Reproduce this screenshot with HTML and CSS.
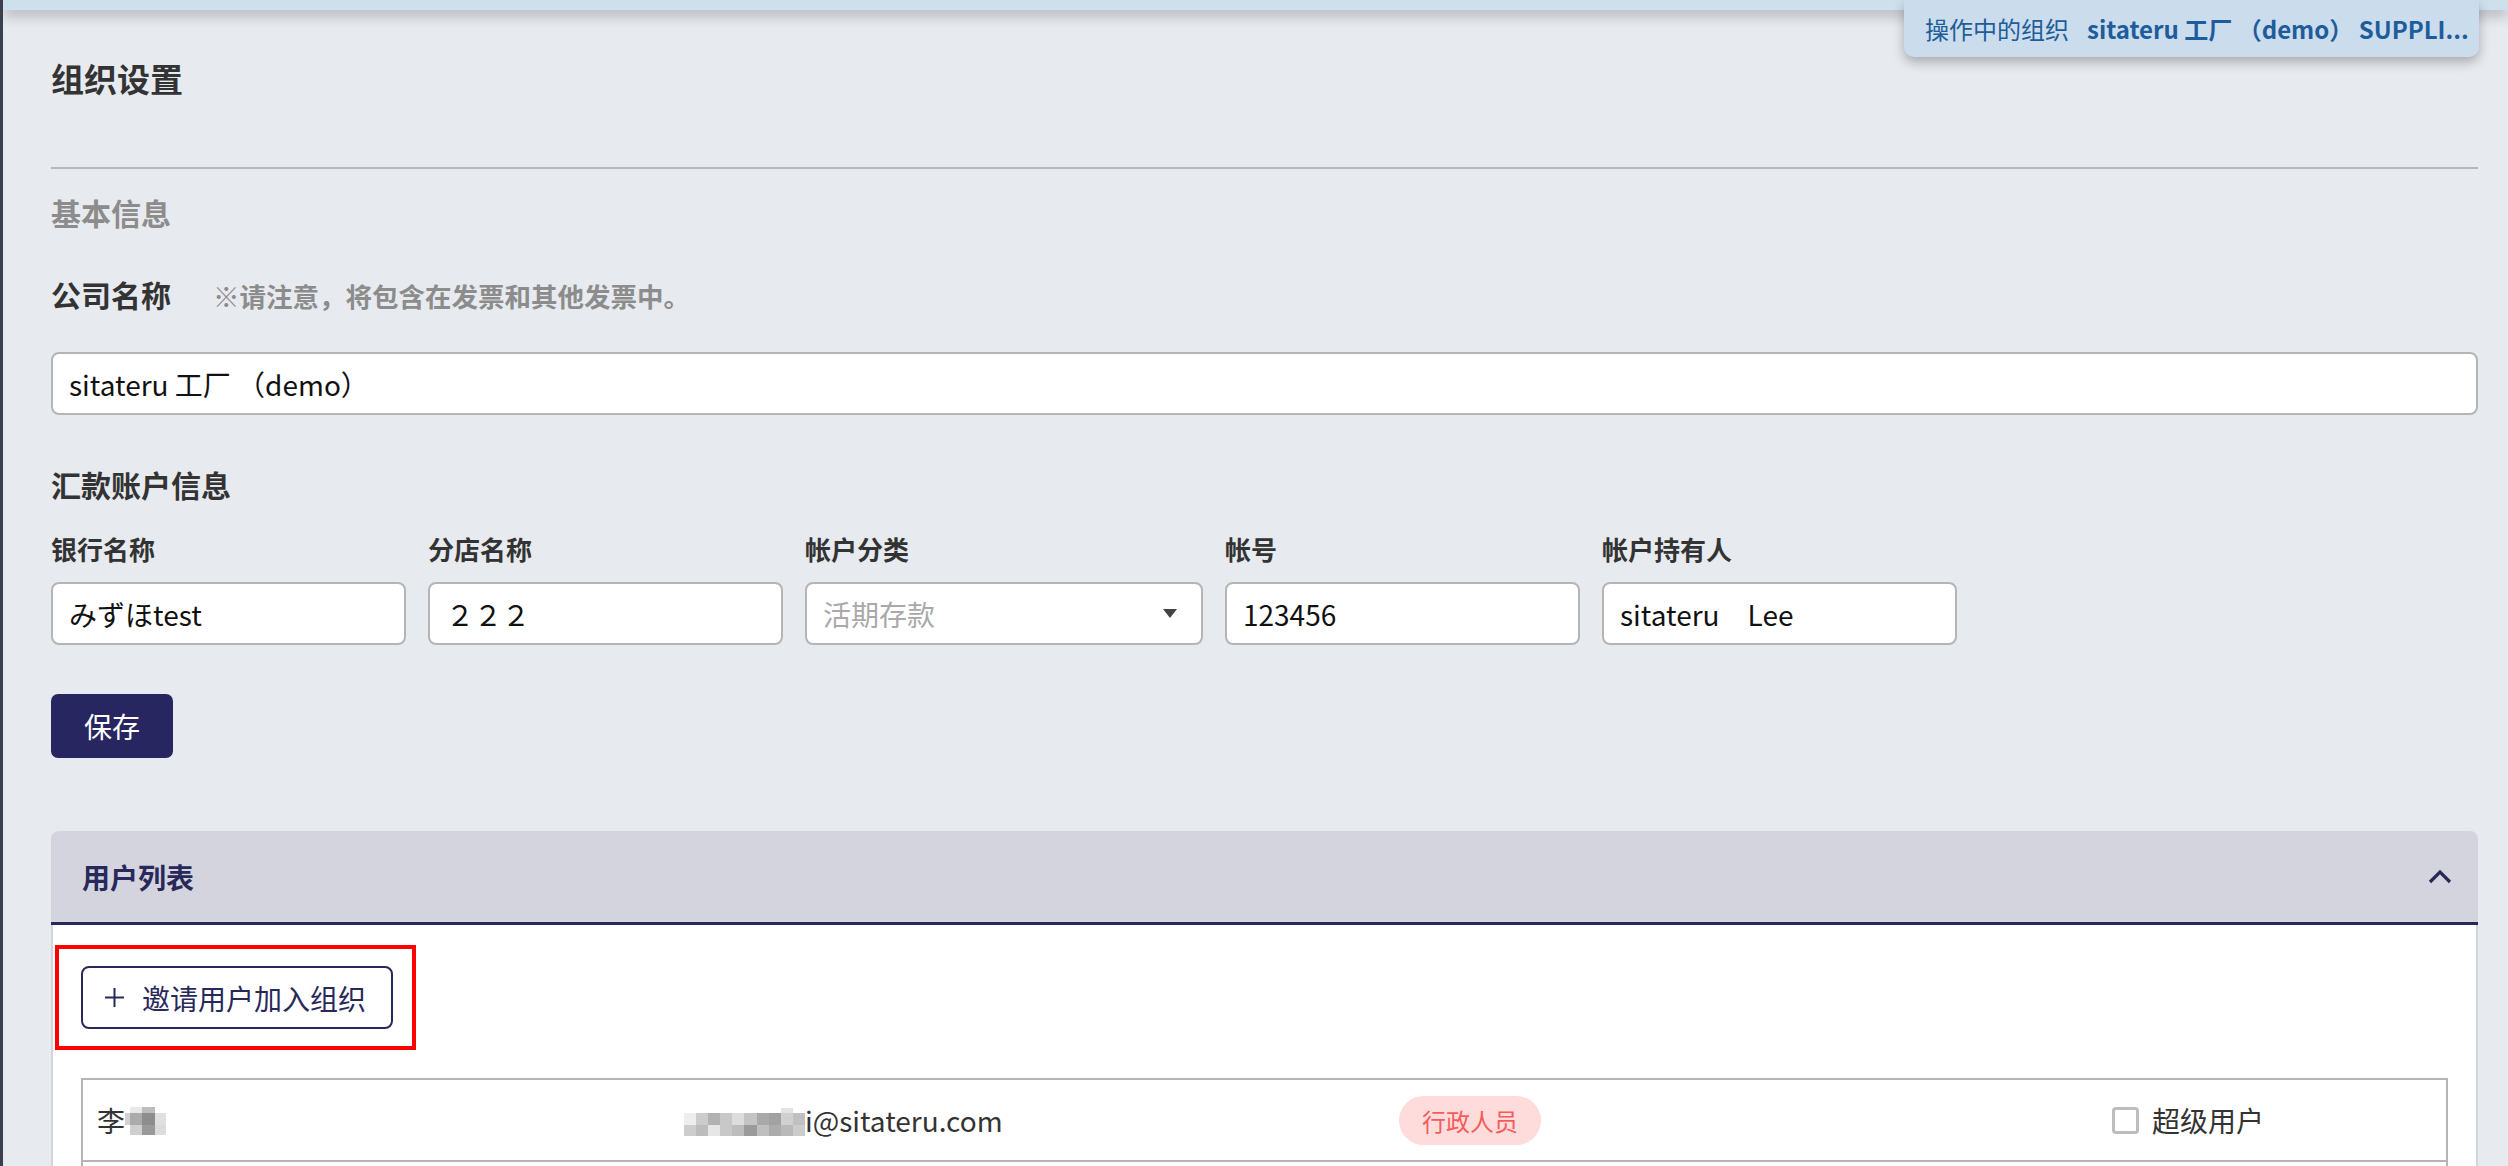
FILE: index.html
```html
<!DOCTYPE html>
<html lang="zh-CN">
<head>
    <meta charset="UTF-8">
    <meta name="viewport" content="width=device-width, initial-scale=1.0">
    <title>组织设置</title>
    <link rel="stylesheet" href="styles.css">
</head>
<body>

    <div class="topbar">
        <div class="org-badge">
            <span>操作中的组织</span>
            <strong>sitateru 工厂 （demo） SUPPLI...</strong>
        </div>
    </div>

    <div class="page">
        <h1 class="title">组织设置</h1>
        <div class="divider"></div>

        <div class="section-label">基本信息</div>

        <div class="field-head">
            <span>公司名称</span>
            <span class="note">※请注意，将包含在发票和其他发票中。</span>
        </div>
        <input class="text-input full" type="text" value="sitateru 工厂 （demo）">

        <div class="subhead">汇款账户信息</div>
        <div class="bank-row">
            <div class="bank-field">
                <label>银行名称</label>
                <input class="text-input" type="text" value="みずほtest">
            </div>
            <div class="bank-field">
                <label>分店名称</label>
                <input class="text-input" type="text" value="２２２">
            </div>
            <div class="bank-field wide">
                <label>帐户分类</label>
                <div class="select">
                    <span class="placeholder">活期存款</span>
                    <svg width="14" height="9" viewBox="0 0 14 9"><path d="M0 0 H14 L7 9 Z" fill="#444"/></svg>
                </div>
            </div>
            <div class="bank-field">
                <label>帐号</label>
                <input class="text-input" type="text" value="123456">
            </div>
            <div class="bank-field">
                <label>帐户持有人</label>
                <input class="text-input" type="text" value="sitateru　Lee">
            </div>
        </div>

        <button class="btn-save">保存</button>

        <div class="panel">
            <div class="panel-head">
                <span>用户列表</span>
                <svg width="24" height="15" viewBox="0 0 24 15"><path d="M2 13 L12 3 L22 13" fill="none" stroke="#28285a" stroke-width="3.2"/></svg>
            </div>
            <div class="panel-body">
                <div class="highlight">
                    <button class="btn-invite">
                        <svg width="19" height="19" viewBox="0 0 19 19"><path d="M9.5 0 V19 M0 9.5 H19" stroke="#28285a" stroke-width="2"/></svg>
                        <span>邀请用户加入组织</span>
                    </button>
                </div>

                <div class="user-table">
                    <div class="user-row">
                        <div class="cell-name">李<span class="mosaic name-mosaic">
                            <i></i><i style="background:#e8e8e8"></i><i style="background:#bdbdbd"></i><i></i>
                            <i style="background:#d2d2d2"></i><i style="background:#ababab"></i><i style="background:#8d8d8d"></i><i style="background:#e0e0e0"></i>
                            <i></i><i style="background:#cfcfcf"></i><i style="background:#9a9a9a"></i><i style="background:#dcdcdc"></i>
                        </span></div>
                        <div class="cell-mail"><span class="mosaic mail-mosaic">
                            <i></i><i></i><i></i><i></i><i></i><i></i><i></i><i></i><i style="background:#e4e4e4"></i><i></i>
                            <i style="background:#eeeeee"></i><i style="background:#cccccc"></i><i style="background:#b2b2b2"></i><i style="background:#c8c8c8"></i><i style="background:#dddddd"></i><i style="background:#c4c4c4"></i><i style="background:#a9a9a9"></i><i style="background:#a2a2a2"></i><i style="background:#d0d0d0"></i><i style="background:#c0c0c0"></i>
                            <i style="background:#cdcdcd"></i><i style="background:#bcbcbc"></i><i style="background:#e6e6e6"></i><i style="background:#c8c8c8"></i><i style="background:#bdbdbd"></i><i style="background:#9b9b9b"></i><i style="background:#bfbfbf"></i><i style="background:#acacac"></i><i style="background:#b9b9b9"></i><i style="background:#cccccc"></i>
                        </span>i@sitateru.com</div>
                        <div class="cell-role"><span class="role-badge">行政人员</span></div>
                        <div class="cell-super"><span class="checkbox"></span>超级用户</div>
                    </div>
                    <div class="user-row"></div>
                </div>
            </div>
        </div>
    </div>

</body>
</html>
```

FILE: styles.css
```css
body {
    margin: 0;
    min-height: 100vh;
    box-sizing: border-box;
    background: #e7eaef;
    border-left: 3px solid #3b414c;
    font-family: "Noto Sans CJK SC", "Noto Sans", sans-serif;
    color: #333;
    overflow: hidden;
}

/* top strip and current organisation */
.topbar {
    position: relative;
    height: 10px;
    background: #cfe0ed;
    box-shadow: 0 5px 14px rgba(0, 0, 0, 0.28);
    z-index: 2;
}

.org-badge {
    position: absolute;
    top: 0;
    right: 29px;
    width: 575px;
    height: 57px;
    box-sizing: border-box;
    padding: 0 15px 0 21px;
    display: flex;
    align-items: center;
    gap: 18px;
    background: #cbddec;
    border-radius: 0 0 10px 10px;
    box-shadow: 0 5px 12px rgba(0, 0, 0, 0.28);
    color: #1e5c9b;
    font-size: 24px;
    white-space: nowrap;
    overflow: hidden;
}

.org-badge strong {
    font-weight: 700;
}

.page {
    padding: 0 30px 40px 48px;
}

.title {
    margin: 46px 0 0;
    font-size: 33px;
    line-height: 44px;
    font-weight: 700;
}

.divider {
    height: 2px;
    margin-top: 67px;
    background: #b6b7ba;
}

.section-label {
    margin-top: 24px;
    font-size: 30px;
    line-height: 38px;
    font-weight: 700;
    color: #8c8c8c;
}

.field-head {
    margin-top: 44px;
    display: flex;
    align-items: baseline;
    gap: 42px;
    font-size: 30px;
    line-height: 38px;
    font-weight: 700;
}

.field-head .note {
    font-size: 26.5px;
    color: #8c8c8c;
}

.text-input {
    display: block;
    width: 100%;
    height: 63px;
    box-sizing: border-box;
    padding: 0 16px;
    border: 2px solid #b5b5b5;
    border-radius: 8px;
    background: #fff;
    font-family: inherit;
    font-size: 28px;
    color: #111;
    outline: none;
}

.text-input.full {
    margin-top: 37px;
}

.subhead {
    margin-top: 50px;
    font-size: 30px;
    line-height: 38px;
    font-weight: 700;
}

/* bank account fields */
.bank-row {
    margin-top: 31px;
    display: flex;
    gap: 22px;
}

.bank-field {
    width: 355px;
    display: flex;
    flex-direction: column;
    gap: 18px;
}

.bank-field.wide {
    width: 398px;
}

.bank-field label {
    font-size: 26px;
    line-height: 30px;
    font-weight: 700;
}

.select {
    height: 63px;
    box-sizing: border-box;
    padding: 0 24px 0 16px;
    border: 2px solid #b5b5b5;
    border-radius: 8px;
    background: #fff;
    display: flex;
    align-items: center;
    justify-content: space-between;
    font-size: 28px;
}

.select .placeholder {
    color: #a9a9a9;
}

.btn-save {
    display: block;
    margin-top: 49px;
    width: 122px;
    height: 64px;
    border: none;
    border-radius: 7px;
    background: #272660;
    color: #fff;
    font-family: inherit;
    font-size: 28px;
}

/* user list panel */
.panel {
    margin-top: 73px;
}

.panel-head {
    height: 91px;
    padding: 0 26px 0 31px;
    display: flex;
    align-items: center;
    justify-content: space-between;
    background: #d4d4de;
    border-radius: 8px 8px 0 0;
    border-bottom: 3px solid #28285a;
    font-size: 28px;
    font-weight: 700;
    color: #28285a;
}

.panel-body {
    padding: 20px 28px 0;
    background: #fff;
    border-left: 2px solid #d4d4da;
    border-right: 2px solid #d4d4da;
}

.highlight {
    display: inline-block;
    margin-left: -26px;
    padding: 17px 19px 17px 22px;
    border: 4px solid #ff0000;
}

.btn-invite {
    width: 312px;
    height: 63px;
    box-sizing: border-box;
    padding: 0 0 0 22px;
    display: flex;
    align-items: center;
    gap: 18px;
    border: 2px solid #28285a;
    border-radius: 8px;
    background: #fff;
    color: #28285a;
    font-family: inherit;
    font-size: 28px;
}

.user-table {
    margin-top: 28px;
    border: 2px solid #b5b5b5;
    border-bottom: none;
}

.user-row {
    height: 80px;
    padding-left: 14px;
    display: grid;
    grid-template-columns: 587px 715px 713px 1fr;
    align-items: center;
    border-bottom: 2px solid #b5b5b5;
    font-size: 28px;
    color: #333;
}

.cell-name,
.cell-mail,
.cell-super {
    display: flex;
    align-items: center;
}

.mosaic {
    display: inline-grid;
}

.mosaic i {
    display: block;
}

.name-mosaic {
    grid-template-columns: 5px 12px 13px 11px;
    grid-template-rows: 6px 12px 10px;
    margin-top: 2px;
}

.mail-mosaic {
    grid-template-columns: repeat(10, 12.1px);
    grid-template-rows: 5px 12px 11px;
    margin-top: 4px;
}

.role-badge {
    display: inline-flex;
    align-items: center;
    height: 49px;
    padding: 0 23px;
    border-radius: 25px;
    background: #ffdcdc;
    color: #f45c5c;
    font-size: 24px;
}

.checkbox {
    width: 27px;
    height: 27px;
    box-sizing: border-box;
    margin-right: 13px;
    border: 3px solid #bdbdbd;
    border-radius: 4px;
}
```
